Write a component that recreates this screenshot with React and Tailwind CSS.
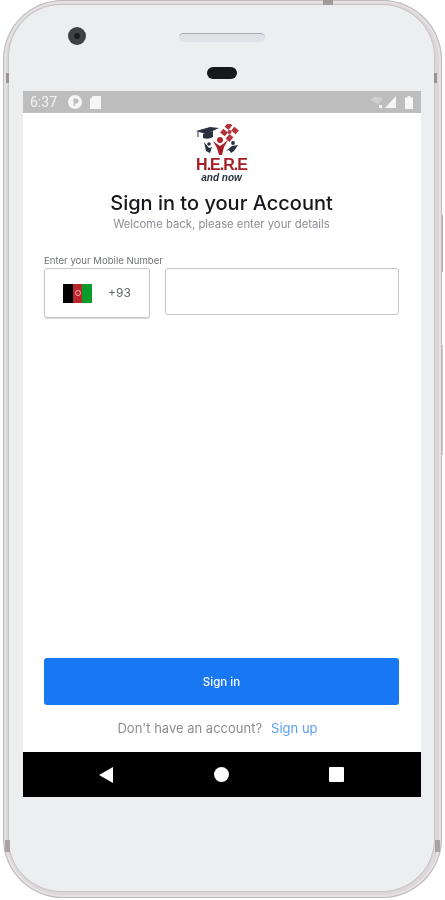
import React from "react";

const font = { fontFamily: "Inter, 'Noto Sans', sans-serif" };

function Logo() {
  return (
    <div className="flex flex-col items-center">
      <svg width="52" height="31" viewBox="0 0 52 31" className="block">
        <path d="M0 7 L14 3 L23 4 L10 10 Z" fill="#27313f" />
        <path d="M7 10 L7 14 Q12 16 17 13 L17 7 Z" fill="#27313f" />
        <path d="M2 7.5 L2 13" stroke="#27313f" strokeWidth="1" />
        <g fill="#b5323a">
          <rect x="30" y="-1" width="5" height="6" transform="rotate(40 32.5 2)" />
          <rect x="36" y="4" width="6" height="5" transform="rotate(40 39 6.5)" />
          <rect x="31" y="11" width="5" height="6" transform="rotate(40 33.5 14)" />
          <rect x="25" y="6" width="6" height="5" transform="rotate(40 28 8.5)" />
          <circle cx="33.5" cy="8" r="2" />
        </g>
        <circle cx="24" cy="16" r="3" fill="#b5222e" />
        <path d="M17 17 L21 20 L24 22 L27 20 L32 16 L28 23 L26 31 L23 31 L21 24 Z" fill="#a81e26" />
        <circle cx="13" cy="20" r="1.8" fill="#27313f" />
        <path d="M8 18 L13 24 L16 23 L14 29 L10 27 Z" fill="#27313f" />
        <circle cx="37" cy="19" r="1.9" fill="#27313f" />
        <path d="M30 27 L36 22 L42 21 L38 27 L35 29 L33 26 Z" fill="#27313f" />
      </svg>
      <div className="text-[16px] leading-[15px] font-bold tracking-[-1px] text-[#a31d24] mt-[2px]" style={{ fontFamily: "'Liberation Sans', sans-serif" }}>H.E.R.E</div>
      <div className="text-[10px] leading-[11px] font-bold italic text-[#27313f]" style={{ fontFamily: "'Liberation Sans', sans-serif" }}>and now</div>
    </div>
  );
}

function Flag() {
  return (
    <div className="w-[29px] h-[19px] flex">
      <div className="flex-1 bg-black" />
      <div className="flex-1 bg-[#b8252b] flex items-center justify-center">
        <div className="w-[6px] h-[6px] rounded-full border border-[#e8b0b0]" />
      </div>
      <div className="flex-1 bg-[#0a9a2a]" />
    </div>
  );
}

function Status() {
  return (
    <div className="h-[22px] bg-[#bdbdbd] flex items-center justify-between pl-[7px] pr-[8px] text-[#f2f2f2]">
      <div className="flex items-center">
        <span className="text-[14px] leading-none" style={{ fontFamily: "Roboto, sans-serif" }}>6:37</span>
        <svg width="14" height="14" viewBox="0 0 14 14" className="ml-[11px]">
          <circle cx="7" cy="7" r="7" fill="#f5f5f5" />
          <path d="M5.5 3.5 H8 Q10.5 3.5 10.5 6 Q10.5 8.5 8 8.5 H7 V11 H5.5 Z" fill="#bdbdbd" />
        </svg>
        <svg width="11" height="13" viewBox="0 0 11 13" className="ml-[8px]">
          <path d="M3 0 H11 V13 H0 V3 Z" fill="#f5f5f5" />
        </svg>
      </div>
      <div className="flex items-center gap-[2px]">
        <svg width="13" height="12" viewBox="0 0 13 12">
          <path d="M0 4 Q6 -2 13 3 L8 8 Z" fill="#d0d0d0" />
          <rect x="9" y="9" width="3" height="3" fill="#f5f5f5" />
        </svg>
        <svg width="11" height="12" viewBox="0 0 11 12">
          <path d="M11 0 V12 H0 Z" fill="#f5f5f5" />
        </svg>
        <svg width="8" height="13" viewBox="0 0 8 13" className="ml-[7px]">
          <path d="M2.5 0 H5.5 V1.5 H8 V13 H0 V1.5 H2.5 Z" fill="#f5f5f5" />
        </svg>
      </div>
    </div>
  );
}

export default function App() {
  return (
    <div className="relative w-[445px] h-[900px] bg-white overflow-hidden blur-[0.4px]" style={font}>
      <span className="absolute left-[441px] top-[215px] w-[2px] h-[57px] bg-[#b5b1b3]" />
      <span className="absolute left-[441px] top-[345px] w-[2px] h-[110px] bg-[#c9c5c7]" />
      <div className="relative ml-[3px] w-[439px] h-[898px] rounded-[60px] bg-[#dcd7d9] pt-[5px] pb-[7px] pl-[6px] pr-[8px] shadow-[inset_0_0_0_1px_#bfbabc,inset_0_0_0_3px_#e6e2e3]">
        <span className="absolute left-[320px] top-0 w-[10px] h-[5px] bg-[#a39c9d]" />
        <span className="absolute left-[3px] top-[73px] w-[3px] h-[10px] bg-[#9b9495]" />
        <span className="absolute right-[5px] top-[73px] w-[3px] h-[10px] bg-[#9b9495]" />
        <span className="absolute left-[2px] top-[840px] w-[5px] h-[12px] bg-[#a8a2a3]" />
        <span className="absolute right-[2px] top-[840px] w-[5px] h-[12px] bg-[#a8a2a3]" />
        <div className="w-full h-full rounded-[52px] bg-[#eceef0] flex flex-col pl-[14px] shadow-[0_0_0_1px_#c8c4c6]">
          <div className="h-[86px] relative shrink-0">
            <div className="absolute left-[45px] top-[22px] w-[18px] h-[18px] rounded-full bg-[#3f4042] flex items-center justify-center">
              <div className="w-[6px] h-[6px] rounded-full bg-[#1c1d1f]" />
            </div>
            <div className="absolute left-[156px] top-[28px] w-[86px] h-[9px] rounded-full bg-[#dfe2e7] border-t border-[#a8abb0]" />
            <div className="absolute left-[184px] top-[62px] w-[30px] h-[12px] rounded-full bg-[#17181a]" />
          </div>
          <div className="w-[398px] shrink-0">
            <Status />
            <div className="h-[639px] bg-white flex flex-col pl-[21px] pr-[22px]">
              <div className="flex flex-col items-center pt-[11px]">
                <Logo />
                <h1 className="text-[20px] leading-[26px] font-medium text-[#16181d] mt-[7px]">Sign in to your Account</h1>
                <p className="text-[11.3px] leading-[16px] text-[#8b8e93]">Welcome back, please enter your details</p>
              </div>
              <label className="text-[9.6px] leading-[12px] text-[#6f7277] mt-[23px]">Enter your Mobile Number</label>
              <div className="flex gap-[15px] items-start mt-[1px]">
                <div className="w-[106px] h-[50px] rounded-[3px] border border-[#c3c5c8] shadow-[0_1px_1px_#d5d6d8] flex items-center pl-[18px]">
                  <Flag />
                  <span className="text-[12px] text-[#63666b] ml-[16px]">+93</span>
                </div>
                <div className="flex-1 h-[47px] rounded-[3px] border border-[#c3c5c8]" />
              </div>
              <div className="flex-1" />
              <button className="h-[47px] w-full rounded-[3px] bg-[#1877f2] text-white text-[11.5px] font-medium pt-[2px]">Sign in</button>
              <div className="flex items-center justify-center gap-[9px] h-[47px] text-[13px] pr-[8px] pt-[1px]">
                <span className="text-[#8b8e93]">Don't have an account?</span>
                <span className="text-[#5b9ff0]">Sign up</span>
              </div>
            </div>
            <div className="h-[45px] bg-black flex items-center justify-between pl-[76px] pr-[77px]">
              <svg width="14" height="16" viewBox="0 0 14 16"><path d="M14 0 V16 L0 8 Z" fill="#fff" /></svg>
              <div className="w-[15px] h-[15px] rounded-full bg-white" />
              <div className="w-[15px] h-[15px] bg-white rounded-[1px]" />
            </div>
          </div>
        </div>
      </div>
    </div>
  );
}
